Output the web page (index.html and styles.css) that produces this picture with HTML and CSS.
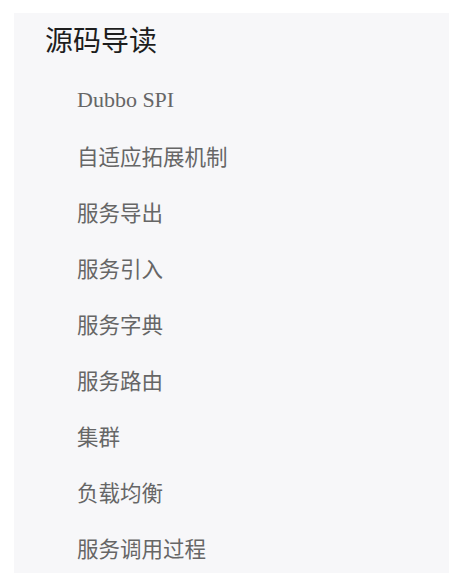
FILE: index.html
```html
<!DOCTYPE html>
<html lang="zh-CN">
<head>
<meta charset="utf-8">
<title>源码导读</title>
<link rel="stylesheet" href="styles.css">
</head>
<body>
<nav class="panel">
  <h2 class="title">源码导读</h2>
  <ul class="menu">
    <li class="item latin">Dubbo SPI</li>
    <li class="item">自适应拓展机制</li>
    <li class="item">服务导出</li>
    <li class="item">服务引入</li>
    <li class="item">服务字典</li>
    <li class="item">服务路由</li>
    <li class="item">集群</li>
    <li class="item">负载均衡</li>
    <li class="item">服务调用过程</li>
  </ul>
</nav>
</body>
</html>
```
FILE: styles.css
```css
html, body {
  margin: 0;
  padding: 0;
  background: #ffffff;
}
body {
  padding: 13px 18px 5px 14px;
  font-family: "Noto Sans CJK SC", "Noto Sans", sans-serif;
}
.panel {
  width: 435px;
  height: 560px;
  background: #f7f7f9;
  box-sizing: border-box;
  padding-top: 9px;
}
.title {
  margin: 0;
  padding-left: 31px;
  font-size: 28px;
  line-height: 34px;
  font-weight: 400;
  color: #1e1e1e;
}
.menu {
  list-style: none;
  margin: 16px 0 0 0;
  padding: 0 0 0 63px;
}
.item {
  font-size: 21.5px;
  line-height: 56px;
  height: 56px;
  color: #666666;
}
.latin {
  font-family: "Liberation Serif", serif;
  font-size: 22px;
  color: #666666;
}
```
